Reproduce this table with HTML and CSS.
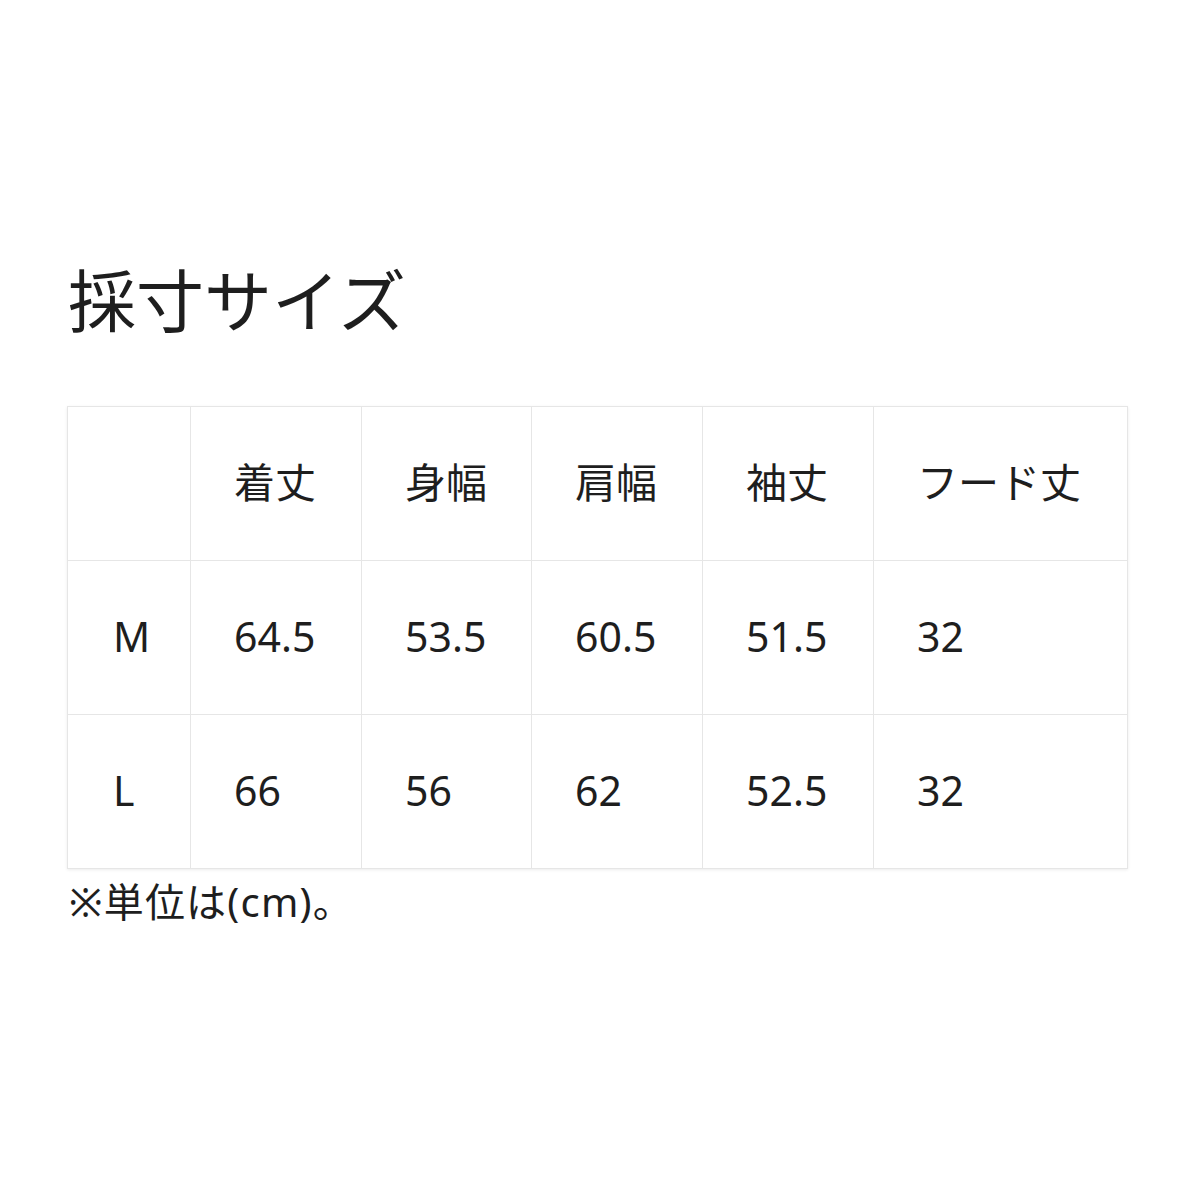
FILE: index.html
```html
<!DOCTYPE html>
<html lang="ja">
<head>
<meta charset="utf-8">
<link rel="stylesheet" href="styles.css">
</head>
<body>
<main class="page">
  <h1 class="title">採寸サイズ</h1>
  <table class="size-table">
    <colgroup>
      <col class="c0"><col class="c1"><col class="c2"><col class="c3"><col class="c4"><col class="c5">
    </colgroup>
    <tr><td></td><td>着丈</td><td>身幅</td><td>肩幅</td><td>袖丈</td><td>フード丈</td></tr>
    <tr><td>M</td><td>64.5</td><td>53.5</td><td>60.5</td><td>51.5</td><td>32</td></tr>
    <tr><td>L</td><td>66</td><td>56</td><td>62</td><td>52.5</td><td>32</td></tr>
  </table>
  <p class="note">※単位は(cm)。</p>
</main>
</body>
</html>
```

FILE: styles.css
```css
html, body {
  margin: 0;
  padding: 0;
  background: #ffffff;
}
.page {
  width: 1200px;
  height: 1200px;
  box-sizing: border-box;
  padding: 267px 0 0 67px;
  font-family: "Noto Sans", "Noto Sans CJK JP", sans-serif;
  color: #1e1e1e;
}
.title {
  margin: 0 0 0 1px;
  font-size: 68px;
  font-weight: 400;
  line-height: 68px;
  letter-spacing: 0;
}
.size-table {
  margin-top: 71px;
  border-collapse: collapse;
  table-layout: fixed;
  width: 1060px;
  box-shadow: 0 1px 3px rgba(0, 0, 0, 0.08);
}
.c0 { width: 123px; }
.c1 { width: 171px; }
.c2 { width: 170px; }
.c3 { width: 171px; }
.c4 { width: 171px; }
.c5 { width: 254px; }
.size-table td {
  border: 1px solid #e6e6e6;
  height: 154px;
  padding: 0 0 2px 43px;
  font-size: 41px;
  line-height: 1;
  vertical-align: middle;
  text-align: left;
  box-sizing: border-box;
}
.size-table tr td:first-child {
  padding-left: 45px;
}
.note {
  margin: 7px 0 0 2px;
  font-size: 40px;
  line-height: 52px;
  letter-spacing: 1.2px;
}
```
